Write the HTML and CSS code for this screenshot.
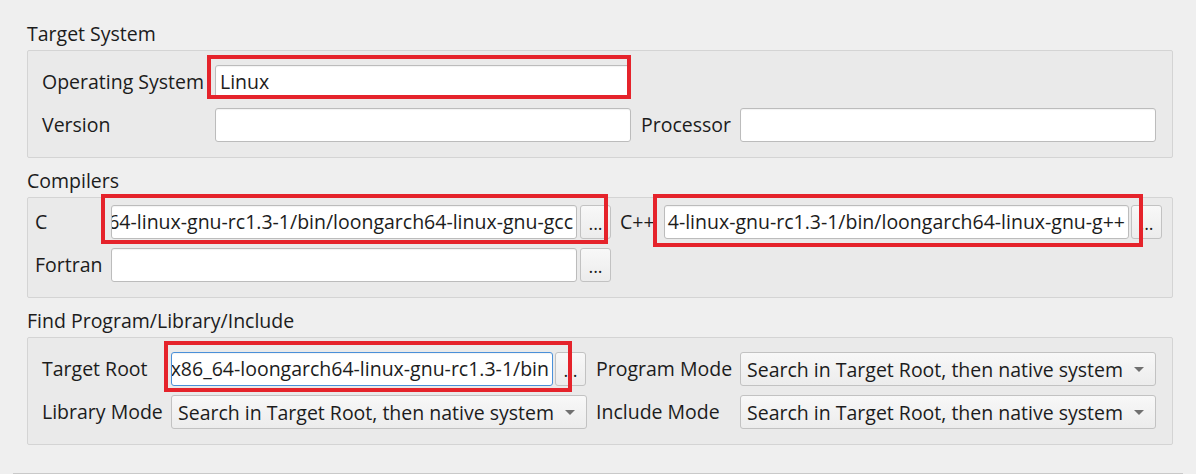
FILE: index.html
```html
<!DOCTYPE html>
<html>
<head>
<meta charset="utf-8">
<link rel="stylesheet" href="styles.css">
</head>
<body>
<div class="page">
  <section class="section first">
    <div class="section-title">Target System</div>
    <div class="group grid-target">
      <span class="label">Operating System</span>
      <div class="field">Linux</div>
      <span></span><span></span>
      <span class="label">Version</span>
      <div class="field"></div>
      <span class="label">Processor</span>
      <div class="field"></div>
    </div>
  </section>

  <section class="section">
    <div class="section-title">Compilers</div>
    <div class="group grid-compilers">
      <span class="label">C</span>
      <div class="field path"><span>64-linux-gnu-rc1.3-1/bin/loongarch64-linux-gnu-gcc</span></div>
      <div class="btn-cell"><div class="button">...</div></div>
      <span class="label pad">C++</span>
      <div class="field path"><span>4-linux-gnu-rc1.3-1/bin/loongarch64-linux-gnu-g++</span></div>
      <div class="btn-cell"><div class="button">...</div></div>
      <span class="label">Fortran</span>
      <div class="field"></div>
      <div class="btn-cell"><div class="button">...</div></div>
    </div>
  </section>

  <section class="section">
    <div class="section-title">Find Program/Library/Include</div>
    <div class="group grid-find">
      <span class="label">Target Root</span>
      <div class="field-with-button">
        <div class="field path focus"><span>x86_64-loongarch64-linux-gnu-rc1.3-1/bin</span></div>
        <div class="button">...</div>
      </div>
      <span class="label pad">Program Mode</span>
      <div class="combo"><span>Search in Target Root, then native system</span><i class="arrow"></i></div>
      <span class="label">Library Mode</span>
      <div class="combo"><span>Search in Target Root, then native system</span><i class="arrow"></i></div>
      <span class="label pad">Include Mode</span>
      <div class="combo"><span>Search in Target Root, then native system</span><i class="arrow"></i></div>
    </div>
  </section>

  <div class="separator"></div>

  <div class="mark mark-os"></div>
  <div class="mark mark-c"></div>
  <div class="mark mark-cxx"></div>
  <div class="mark mark-root"></div>
</div>
</body>
</html>
```

FILE: styles.css
```css
* { box-sizing: border-box; }
html, body {
  margin: 0;
  padding: 0;
  background: #efefef;
}
body {
  font-family: "Open Sans", "Noto Sans", sans-serif;
  font-size: 19.5px;
  color: #1c1c1c;
  overflow: hidden;
}
.page {
  position: relative;
  width: 1196px;
  height: 474px;
  padding: 23px 23px 0 27px;
}
.section + .section { margin-top: 12px; }
.section-title {
  height: 22px;
  line-height: 22px;
  margin-bottom: 5px;
  white-space: nowrap;
}
.group {
  background: #eaeaea;
  border: 1px solid #d4d4d4;
  border-radius: 2px;
  display: grid;
  row-gap: 9px;
  grid-auto-rows: 34px;
  align-items: center;
}
.grid-target {
  padding: 14px 15px 15px 14px;
  grid-template-columns: 163px 416px 89px 416px;
  column-gap: 10px;
}
.grid-compilers {
  padding: 7px 10px 15px 7px;
  grid-template-columns: 76px 466px 34px 53px 465px 33px;
}
.grid-find {
  padding: 14px 15px 15px 14px;
  grid-template-columns: 129px 416px 153px 416px;
}
.label {
  white-space: nowrap;
  line-height: 34px;
}
.label.pad { padding-left: 9px; }
.field {
  height: 34px;
  background: #fff;
  border: 1px solid #bcbcbc;
  border-radius: 3px;
  box-shadow: inset 0 1px 1px rgba(0,0,0,0.05);
  padding: 0 4px;
  line-height: 32px;
  white-space: nowrap;
  overflow: hidden;
}
.field.path {
  display: flex;
  justify-content: flex-end;
  padding: 0 3px 0 0;
}
.field.path span { flex: none; }
.field.focus {
  border-color: #4a90d9;
}
.btn-cell {
  display: flex;
  justify-content: flex-end;
  height: 34px;
}
.button {
  width: 31px;
  height: 34px;
  border: 1px solid #c2c2c2;
  border-radius: 3px;
  background: linear-gradient(#f8f8f8, #ececec);
  text-align: center;
  line-height: 34px;
  font-size: 18px;
}
.field-with-button {
  display: flex;
  gap: 2px;
  width: 415px;
}
.field-with-button .field { flex: 1; min-width: 0; }
.combo {
  height: 34px;
  border: 1px solid #c2c2c2;
  border-radius: 3px;
  background: linear-gradient(#f8f8f8, #ececec);
  padding: 0 11px 0 6px;
  display: flex;
  align-items: center;
  justify-content: space-between;
  white-space: nowrap;
}
.arrow {
  width: 0;
  height: 0;
  border-left: 5px solid transparent;
  border-right: 5px solid transparent;
  border-top: 5px solid #707070;
}
.separator {
  margin: 28px -10px 0 -14px;
  height: 2px;
  border-top: 1px solid #c9c9c9;
  background: #f9f9f9;
}
.mark {
  position: absolute;
  border: 4px solid #e5232b;
  pointer-events: none;
}
.mark-os { left: 207px; top: 55px; width: 424px; height: 44px; }
.mark-c { left: 101px; top: 194px; width: 507px; height: 50px; }
.mark-cxx { left: 653px; top: 194px; width: 490px; height: 53px; }
.mark-root { left: 164px; top: 341px; width: 408px; height: 51px; }
```
